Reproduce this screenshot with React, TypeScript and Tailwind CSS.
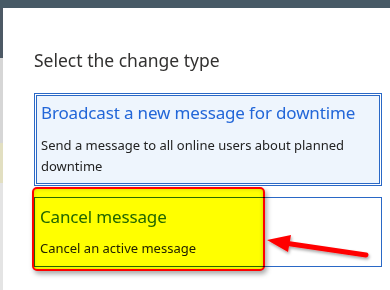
import React from "react";

export default function App() {
  const font = { fontFamily: '"Noto Sans", "Open Sans", sans-serif' };
  return (
    <div className="w-[390px] h-[290px] overflow-hidden flex flex-col bg-white" style={font}>
      <div className="h-[8px] shrink-0 bg-[#475a66]" />
      <div className="flex flex-1 min-h-0">
        <div className="w-[3px] shrink-0 flex flex-col">
          <div className="h-[50px] bg-[#4d5965]" />
          <div className="h-[85px] bg-[#d6d6d6]" />
          <div className="h-[40px] bg-[#e2dfc1]" />
          <div className="flex-1 bg-[#e4e4e4]" />
        </div>
        <div className="flex-1 bg-white pl-[31px] pr-[8px] relative">
          <h2 className="mt-[40px] text-[17.5px] leading-[24px] text-[#323130]">Select the change type</h2>
          <div className="mt-[21px] border border-[#2a68c6] p-[1px]">
            <div className="border border-[#2a68c6] bg-[#eef5fd] px-[4px] pt-[5px] pb-[6px]">
              <div className="text-[17px] tracking-[-0.15px] leading-[24px] text-[#2266d8] whitespace-nowrap">Broadcast a new message for downtime</div>
              <div className="mt-[10px] text-[13px] leading-[21px] text-[#222]">
                Send a message to all online users about planned downtime
              </div>
            </div>
          </div>
          <div className="mt-[11px] relative">
            <div className="border border-[#2a68c6] bg-white px-[5px] pt-[7px] pb-[7px]">
              <div className="text-[17px] tracking-[-0.15px] leading-[24px] text-[#2266d8]">Cancel message</div>
              <div className="mt-[9px] text-[13px] leading-[21px] text-[#222]">Cancel an active message</div>
            </div>
            <div className="absolute left-[-2px] top-[-10px] w-[233px] h-[84px] rounded-[5px] border-2 border-[#ff0000] bg-[#ffff00] mix-blend-multiply shadow-[2px_3px_5px_rgba(0,0,0,0.35),inset_0_0_4px_rgba(0,0,0,0.18)]" />
          </div>
          <svg className="absolute left-[264px] top-[218px] overflow-visible" width="110" height="34" viewBox="0 0 110 34">
            <defs>
              <filter id="sh" x="-20%" y="-50%" width="140%" height="200%">
                <feDropShadow dx="1" dy="2" stdDeviation="1.5" floodColor="#000" floodOpacity="0.35" />
              </filter>
            </defs>
            <g filter="url(#sh)">
              <line x1="99" y1="29" x2="14" y2="16.5" stroke="#ff0000" strokeWidth="5" strokeLinecap="round" />
              <polygon points="0,14 24,9 21,26" fill="#ff0000" />
            </g>
          </svg>
        </div>
      </div>
    </div>
  );
}
